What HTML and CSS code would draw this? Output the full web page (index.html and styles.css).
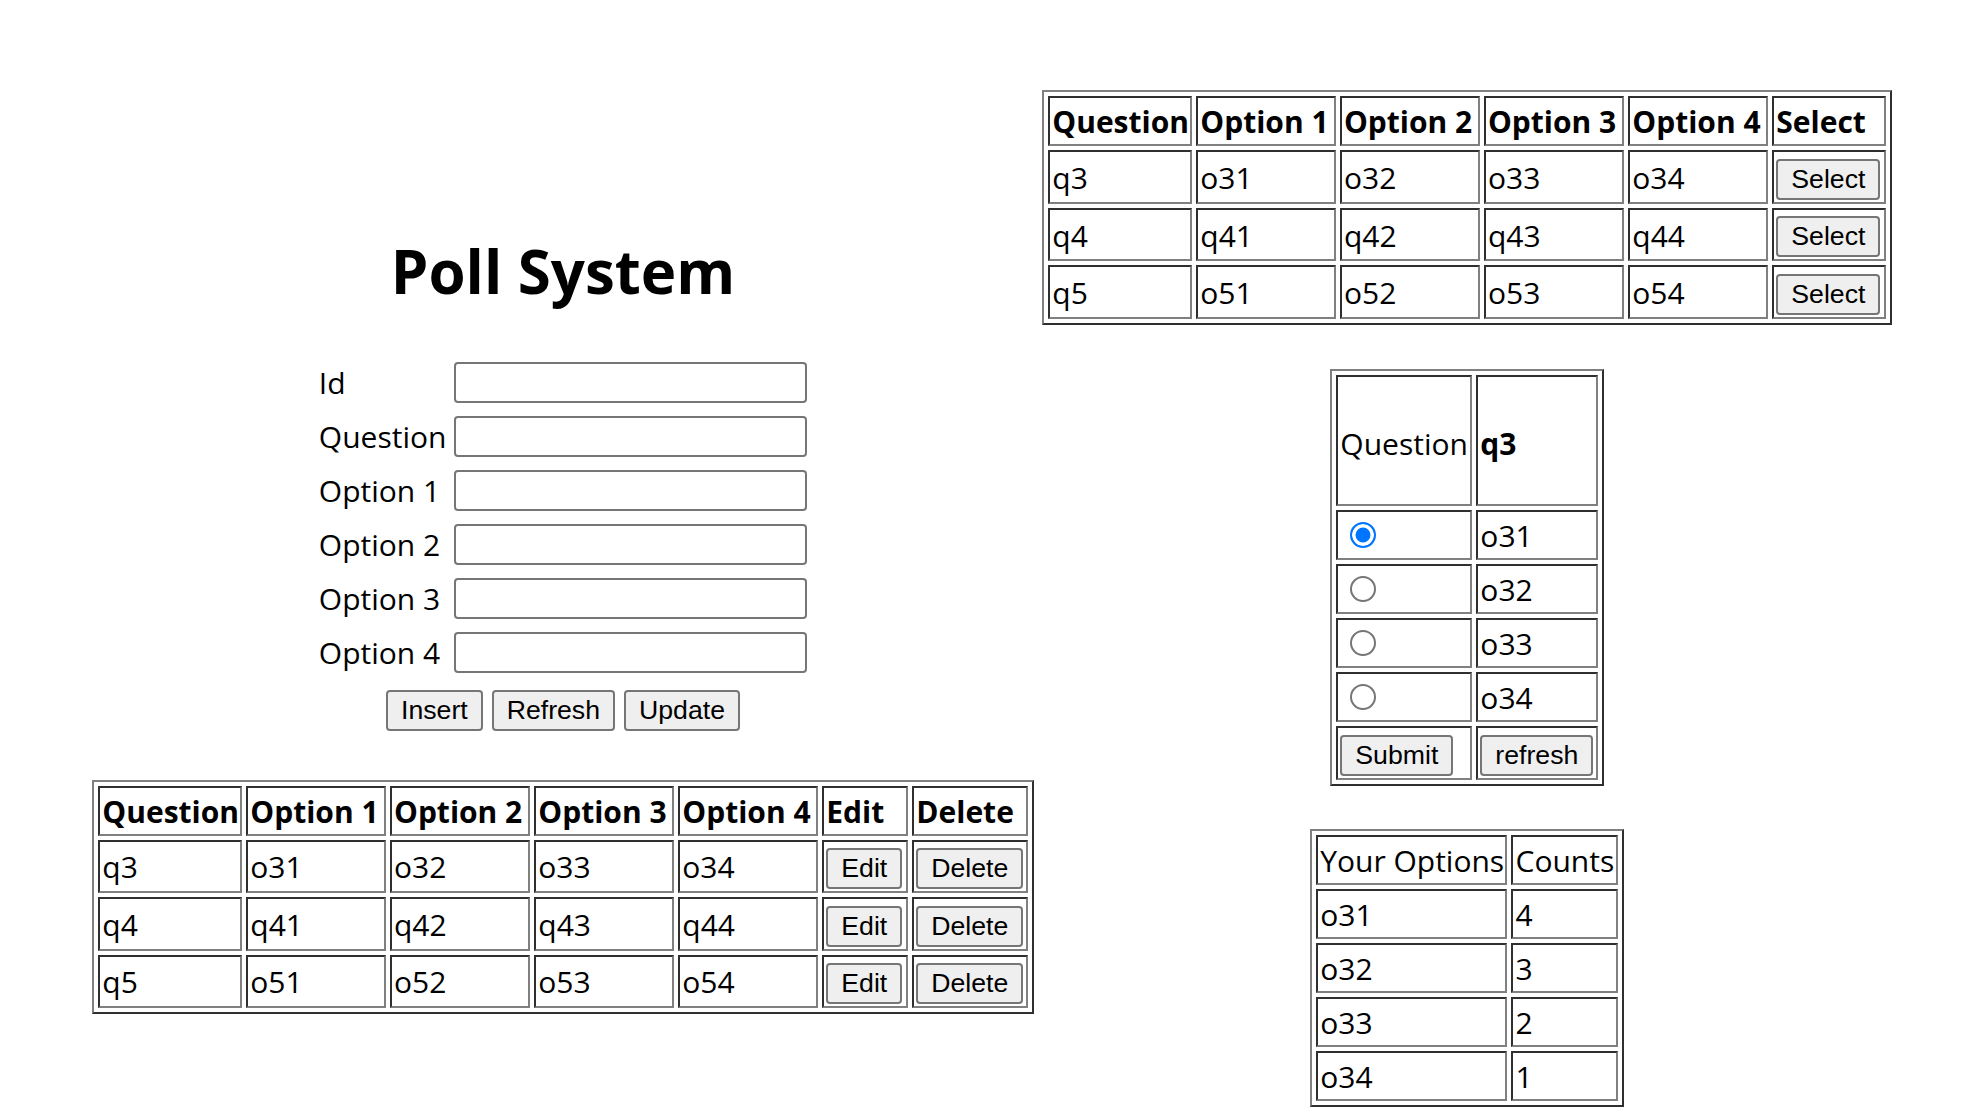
FILE: index.html
```html
<!DOCTYPE html>
<html lang="en">
<head>
<meta charset="utf-8">
<title>Poll System</title>
<link rel="stylesheet" href="styles.css">
</head>
<body>
<div class="page">
  <div class="col-left">
    <h1 class="title">Poll System</h1>
    <div class="form">
      <label class="lbl" for="f-id">Id</label><input id="f-id" class="field" type="text">
      <label class="lbl" for="f-q">Question</label><input id="f-q" class="field" type="text">
      <label class="lbl" for="f-o1">Option 1</label><input id="f-o1" class="field" type="text">
      <label class="lbl" for="f-o2">Option 2</label><input id="f-o2" class="field" type="text">
      <label class="lbl" for="f-o3">Option 3</label><input id="f-o3" class="field" type="text">
      <label class="lbl" for="f-o4">Option 4</label><input id="f-o4" class="field" type="text">
    </div>
    <div class="actions">
      <button class="btn" type="button">Insert</button>
      <button class="btn" type="button">Refresh</button>
      <button class="btn" type="button">Update</button>
    </div>
    <table class="grid grid-admin">
      <tr><th>Question</th><th>Option 1</th><th>Option 2</th><th>Option 3</th><th>Option 4</th><th>Edit</th><th>Delete</th></tr>
      <tr><td>q3</td><td>o31</td><td>o32</td><td>o33</td><td>o34</td><td class="cell-btn"><button class="btn" type="button">Edit</button></td><td class="cell-btn"><button class="btn" type="button">Delete</button></td></tr>
      <tr><td>q4</td><td>q41</td><td>q42</td><td>q43</td><td>q44</td><td class="cell-btn"><button class="btn" type="button">Edit</button></td><td class="cell-btn"><button class="btn" type="button">Delete</button></td></tr>
      <tr><td>q5</td><td>o51</td><td>o52</td><td>o53</td><td>o54</td><td class="cell-btn"><button class="btn" type="button">Edit</button></td><td class="cell-btn"><button class="btn" type="button">Delete</button></td></tr>
    </table>
  </div>
  <div class="col-right">
    <table class="grid grid-list">
      <tr><th>Question</th><th>Option 1</th><th>Option 2</th><th>Option 3</th><th>Option 4</th><th>Select</th></tr>
      <tr><td>q3</td><td>o31</td><td>o32</td><td>o33</td><td>o34</td><td class="cell-btn"><button class="btn" type="button">Select</button></td></tr>
      <tr><td>q4</td><td>q41</td><td>q42</td><td>q43</td><td>q44</td><td class="cell-btn"><button class="btn" type="button">Select</button></td></tr>
      <tr><td>q5</td><td>o51</td><td>o52</td><td>o53</td><td>o54</td><td class="cell-btn"><button class="btn" type="button">Select</button></td></tr>
    </table>
    <table class="grid vote">
      <tr class="q-row"><td>Question</td><td class="q-text">q3</td></tr>
      <tr><td class="cell-radio"><input class="radio" type="radio" name="opt" checked></td><td>o31</td></tr>
      <tr><td class="cell-radio"><input class="radio" type="radio" name="opt"></td><td>o32</td></tr>
      <tr><td class="cell-radio"><input class="radio" type="radio" name="opt"></td><td>o33</td></tr>
      <tr><td class="cell-radio"><input class="radio" type="radio" name="opt"></td><td>o34</td></tr>
      <tr><td class="cell-btn"><button class="btn" type="button">Submit</button></td><td class="cell-btn"><button class="btn" type="button">refresh</button></td></tr>
    </table>
    <table class="grid results">
      <tr><td>Your Options</td><td>Counts</td></tr>
      <tr><td>o31</td><td>4</td></tr>
      <tr><td>o32</td><td>3</td></tr>
      <tr><td>o33</td><td>2</td></tr>
      <tr><td>o34</td><td>1</td></tr>
    </table>
  </div>
</div>
</body>
</html>
```
FILE: styles.css
```css
* { box-sizing: border-box; }

html, body {
  margin: 0;
  padding: 0;
  background: #fff;
}

body {
  font-family: "Open Sans", "Noto Sans", sans-serif;
  font-size: 30px;
  color: #000;
}

.page {
  display: flex;
  justify-content: center;
  align-items: flex-start;
  gap: 8.6px;
}

.col-left {
  width: 941.4px;
  padding-top: 231px;
  display: flex;
  flex-direction: column;
  align-items: center;
}

.col-right {
  width: 849.4px;
  padding-top: 90.3px;
  display: flex;
  flex-direction: column;
  align-items: center;
}

.title {
  margin: 0;
  font-size: 60px;
  line-height: 80px;
  font-weight: 700;
  text-align: center;
}

.form {
  margin-top: 51.3px;
  display: grid;
  grid-template-columns: 126px 353.4px;
  column-gap: 9px;
  row-gap: 13px;
  align-items: center;
}

.lbl {
  line-height: 41px;
  white-space: nowrap;
}

.field {
  width: 353.4px;
  height: 41px;
  margin: 0;
  border: 2px solid #767676;
  border-radius: 4px;
  padding: 2px 4px;
  font: inherit;
  background: #fff;
}

.actions {
  margin-top: 16.7px;
  display: flex;
  gap: 9px;
}

.btn {
  height: 41px;
  margin: 0;
  padding: 0 13px;
  border: 2px solid #767676;
  border-radius: 4px;
  background: #efefef;
  font-family: "Liberation Sans", Arial, sans-serif;
  font-size: 26.67px;
  line-height: 1;
  color: #000;
  white-space: nowrap;
}

/* tables */
.grid {
  border-collapse: separate;
  border-spacing: 4px;
  border: 2px solid;
  border-color: #808080 #2f2f2f #2f2f2f #808080;
  table-layout: fixed;
}

.grid th,
.grid td {
  box-sizing: content-box;
  padding: 3px 2px 1px;
  line-height: 42px;
  border: 2px solid;
  border-color: #2f2f2f #808080 #808080 #2f2f2f;
  text-align: left;
  vertical-align: middle;
  white-space: nowrap;
}

.grid th { font-weight: 700; }

.grid td.cell-btn {
  padding: 6.5px 2px 2px;
  line-height: 0;
}

.cell-btn .btn { display: block; }

.grid td.cell-radio {
  padding: 2px;
  line-height: 0;
}

.radio {
  display: block;
  appearance: none;
  -webkit-appearance: none;
  width: 26px;
  height: 26px;
  margin: 8px 0 8px 10px;
  border-radius: 50%;
  border: 2px solid #767676;
  background: #fff;
}

.radio:checked {
  border: 2.5px solid #0075ff;
  background: #0075ff;
  box-shadow: inset 0 0 0 3.5px #fff;
}

/* admin table (left) */
.grid-admin { width: 941.4px; margin-top: 48.7px; }
.grid-admin th:nth-child(1) { width: 136px; }
.grid-admin th:nth-child(2) { width: 131.7px; }
.grid-admin th:nth-child(3) { width: 132.3px; }
.grid-admin th:nth-child(4) { width: 132px; }
.grid-admin th:nth-child(5) { width: 132px; }
.grid-admin th:nth-child(6) { width: 78px; }
.grid-admin th:nth-child(7) { width: 107.4px; }

/* question list (top right) */
.grid-list { width: 849.4px; }
.grid-list th:nth-child(1) { width: 136px; }
.grid-list th:nth-child(2) { width: 131.7px; }
.grid-list th:nth-child(3) { width: 132px; }
.grid-list th:nth-child(4) { width: 132.3px; }
.grid-list th:nth-child(5) { width: 132px; }
.grid-list th:nth-child(6) { width: 105.4px; }

/* vote table */
.vote { width: 273.3px; margin-top: 43.8px; }
.vote .q-row td {
  padding: 46px 2px 39.9px;
}
.vote .q-row td:nth-child(1) { width: 128px; }
.vote .q-row td:nth-child(2) { width: 113.3px; }
.vote .q-text { font-weight: 700; }

/* results */
.results { width: 313.6px; margin-top: 42.6px; }
.results tr:first-child td:nth-child(1) { width: 183.3px; }
.results tr:first-child td:nth-child(2) { width: 98.3px; }
```
